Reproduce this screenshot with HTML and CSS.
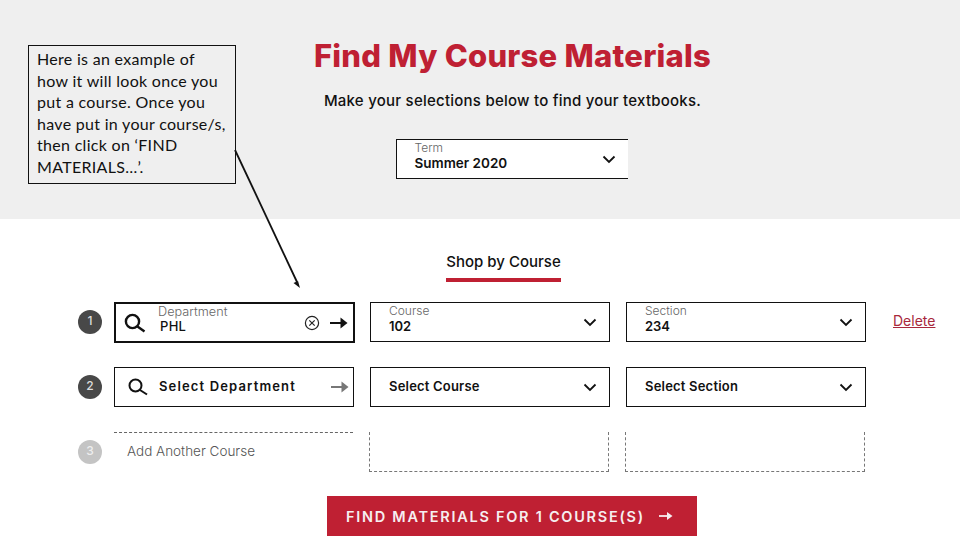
FILE: index.html
```html
<!DOCTYPE html>
<html lang="en">
<head>
<meta charset="utf-8">
<title>Find My Course Materials</title>
<link rel="stylesheet" href="styles.css">
</head>
<body>
<div class="page">
  <header class="hero">
    <h1 class="title">Find My Course Materials</h1>
    <p class="subtitle">Make your selections below to find your textbooks.</p>
    <div class="term">
      <div class="stack">
        <span class="label">Term</span>
        <span class="value value-term">Summer 2020</span>
      </div>
      <svg class="chev" viewBox="0 0 14 9"><path d="M1.500 1.500 7 7l5.500-5.500"/></svg>
    </div>
  </header>

  <main class="shop">
    <div class="tab">Shop by Course</div>

    <div class="rows">
      <div class="row">
        <span class="num">1</span>
        <div class="box box-active">
          <svg class="search" viewBox="0 0 24 20"><circle cx="8.500" cy="8.500" r="6.600"/><path d="m13.500 13.500 7 5"/></svg>
          <div class="stack stack-dept">
            <span class="label label-dept">Department</span>
            <span class="value value-phl">PHL</span>
          </div>
          <svg class="clear" viewBox="0 0 16 16"><circle cx="8" cy="8" r="6.600"/><path d="m5.300 5.300 5.400 5.400m0-5.400-5.400 5.400"/></svg>
          <svg class="arrow" viewBox="0 0 18 12"><path d="M0 6h15"/><path class="tip" d="m10.500 0.500 7 5.500-7 5.500z"/></svg>
        </div>
        <div class="box">
          <div class="stack">
            <span class="label">Course</span>
            <span class="value">102</span>
          </div>
          <svg class="chev" viewBox="0 0 14 9"><path d="M1.500 1.500 7 7l5.500-5.500"/></svg>
        </div>
        <div class="box">
          <div class="stack">
            <span class="label">Section</span>
            <span class="value">234</span>
          </div>
          <svg class="chev" viewBox="0 0 14 9"><path d="M1.500 1.500 7 7l5.500-5.500"/></svg>
        </div>
        <a class="delete" href="#">Delete</a>
      </div>

      <div class="row">
        <span class="num">2</span>
        <div class="box box-dept">
          <svg class="search search-thin" viewBox="0 0 24 20"><circle cx="8.500" cy="8.500" r="6"/><path d="m13 13 7 4.500"/></svg>
          <span class="select select-dept">Select Department</span>
          <svg class="arrow arrow-gray" viewBox="0 0 18 12"><path d="M0 6h15"/><path class="tip" d="m10.500 0.500 7 5.500-7 5.500z"/></svg>
        </div>
        <div class="box"><span class="select">Select Course</span><svg class="chev" viewBox="0 0 14 9"><path d="M1.500 1.500 7 7l5.500-5.500"/></svg></div>
        <div class="box"><span class="select">Select Section</span><svg class="chev" viewBox="0 0 14 9"><path d="M1.500 1.500 7 7l5.500-5.500"/></svg></div>
      </div>

      <div class="row">
        <span class="num num-off">3</span>
        <div class="add">Add Another Course</div>
        <div class="ghost"></div>
        <div class="ghost"></div>
      </div>
    </div>

    <button class="find" type="button">
      <span>FIND MATERIALS FOR 1 COURSE(S)</span>
      <svg class="find-arrow" viewBox="0 0 14 10"><path d="M0 5h11"/><path class="tip" d="m8 1 5.500 4L8 9z"/></svg>
    </button>
  </main>

  <aside class="callout">Here is an example of<br>how it will look once you<br>put a course. Once you<br>have put in your course/s,<br>then click on ‘FIND<br>MATERIALS…’.</aside>
  <svg class="pointer" viewBox="0 0 960 540"><path d="M235 150 297 282"/><path class="pointer-tip" d="m300 288-6.500-5 4.500-2z"/></svg>
</div>
</body>
</html>
```
FILE: styles.css
```css
* { box-sizing: border-box; }
html, body { margin: 0; padding: 0; background: #fff; }
body { font-family: "Inter", "Liberation Sans", sans-serif; color: #111; }
.page { position: relative; width: 960px; height: 540px; overflow: hidden; background: #fff; }

.hero { height: 219px; background: #efefef; display: flex; flex-direction: column; align-items: center; padding-top: 38px; padding-left: 65px; }
.title { margin: 0; font-size: 31px; line-height: 36px; font-weight: 800; color: #bf2033; white-space: nowrap; letter-spacing: 0.250px; }
.subtitle { margin: 18px 0 0; font-size: 15px; line-height: 18px; font-weight: 500; color: #111; white-space: nowrap; letter-spacing: 0.240px; }
.term { margin: 29px 2px 0 0; width: 232px; height: 40px; background: #fff; border: 1px solid #111; border-right: 0; display: flex; align-items: center; justify-content: space-between; padding: 0 12px 0 18px; }

.stack { display: flex; flex-direction: column; padding-bottom: 6px; }
.label { font-size: 12px; line-height: 13px; font-weight: 300; color: #666; }
.label-dept { font-size: 12.700px; }
.value { font-size: 13px; line-height: 15px; font-weight: 600; color: #111; margin-top: 2px; }
.value-term { font-size: 13.500px; }
.chev { width: 14px; height: 9px; fill: none; stroke: #111; stroke-width: 1.800; flex: none; }

.shop { display: flex; flex-direction: column; align-items: flex-start; }
.tab { margin: 33px 0 0 446px; width: 115px; height: 30px; border-bottom: 4px solid #bf2033; text-align: center; font-size: 15px; line-height: 19px; font-weight: 500; white-space: nowrap; }

.rows { display: flex; flex-direction: column; gap: 24px; margin: 20px 0 0 78px; }
.row { display: flex; align-items: flex-start; height: 41px; }
.num { width: 24px; height: 24px; flex: none; border-radius: 50%; background: #484848; color: #ddd; font-size: 12px; font-weight: 500; display: flex; align-items: center; justify-content: center; margin: 8px 12px 0 0; padding-bottom: 3px; }
.num-off { background: #c4c4c4; color: #eee; }

.box { width: 240px; height: 40px; border: 1px solid #111; background: #fff; display: flex; align-items: center; justify-content: space-between; padding: 0 12px 0 18px; margin-right: 16px; flex: none; }
.box-active { width: 241px; height: 41px; border-width: 2px; padding: 0 0 0 8px; margin-right: 15px; justify-content: flex-start; }
.box-dept { justify-content: flex-start; padding: 0 4px 0 12px; }
.stack-dept { margin-left: 10px; width: 146px; }
.value-phl { margin: 1px 0 0 2px; font-weight: 500; letter-spacing: 0.300px; }
.search { width: 24px; height: 20px; flex: none; fill: none; stroke: #111; stroke-width: 2.400; }
.search-thin { stroke-width: 2; }
.clear { width: 16px; height: 16px; fill: none; stroke: #222; stroke-width: 1.200; flex: none; margin-right: 10px; }
.arrow { width: 18px; height: 12px; flex: none; fill: #111; stroke: #111; stroke-width: 2; }
.arrow .tip { stroke: none; }
.arrow-gray { fill: #777; stroke: #777; margin-left: 35px; }
.select { font-size: 13px; line-height: 16px; font-weight: 600; color: #111; white-space: nowrap; letter-spacing: 0.200px; padding-bottom: 2px; }
.select-dept { margin-left: 8px; letter-spacing: 1.150px; }
.delete { font-size: 14px; font-weight: 400; color: #a8283c; margin: 10px 0 0 11px; }

.add { width: 239px; height: 40px; margin-right: 16px; border-top: 1px dashed #666; flex: none; font-size: 13.500px; font-weight: 300; color: #555; padding: 10px 0 0 13px; line-height: 16px; }
.ghost { width: 240px; height: 40px; border: 1px dashed #777; border-top: 0; margin-right: 16px; flex: none; }

.find { margin: 23px 0 0 327px; width: 370px; height: 40px; background: #bf2033; border: 0; color: #f6eef0; font-family: inherit; font-size: 14.500px; font-weight: 600; letter-spacing: 1.730px; display: flex; align-items: center; padding: 0 0 0 19px; white-space: nowrap; }
.find-arrow { width: 14px; height: 10px; margin-left: 14px; fill: #f6eef0; stroke: #f6eef0; stroke-width: 1.800; flex: none; }
.find-arrow .tip { stroke: none; }

.callout { position: absolute; left: 28px; top: 45px; width: 208px; height: 139px; background: #efefef; border: 1px solid #111; padding: 2px 8px; font-family: "Lato", "Liberation Sans", sans-serif; font-size: 16px; line-height: 21.600px; letter-spacing: 0.300px; color: #111; white-space: nowrap; }
.pointer { position: absolute; left: 0; top: 0; width: 960px; height: 540px; pointer-events: none; }
.pointer path { stroke: #111; stroke-width: 1.800; fill: none; }
.pointer .pointer-tip { fill: #111; stroke: none; }
```
